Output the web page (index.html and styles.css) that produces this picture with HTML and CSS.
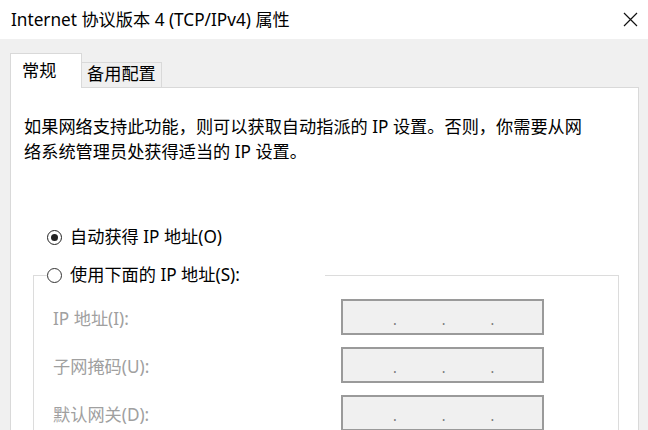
FILE: index.html
```html
<!DOCTYPE html>
<html lang="zh-CN">
<head>
<meta charset="utf-8">
<title>Internet 协议版本 4 (TCP/IPv4) 属性</title>
<link rel="stylesheet" href="styles.css">
</head>
<body>
<div class="window">
  <div class="titlebar">
    <span class="title">Internet 协议版本 4 (TCP/IPv4) 属性</span>
    <svg class="close" width="15" height="15" viewBox="0 0 15 15"><path d="M1 1 L14 14 M14 1 L1 14" stroke="#111" stroke-width="1.2" fill="none"/></svg>
  </div>
  <div class="main">
    <div class="tabs">
      <div class="tab active">常规</div>
      <div class="tab">备用配置</div>
    </div>
    <div class="panel">
      <p class="desc">如果网络支持此功能，则可以获取自动指派的 IP 设置。否则，你需要从网<br>络系统管理员处获得适当的 IP 设置。</p>
      <div class="radio-row auto"><span class="radio checked"></span><span class="radio-label">自动获得 IP 地址(O)</span></div>
      <div class="group">
        <div class="group-head"><span class="radio"></span><span class="radio-label">使用下面的 IP 地址(S):</span></div>
        <div class="fields">
          <span class="field-label">IP 地址(I):</span>
          <div class="ipbox"><span>.</span><span>.</span><span>.</span></div>
          <span class="field-label">子网掩码(U):</span>
          <div class="ipbox"><span>.</span><span>.</span><span>.</span></div>
          <span class="field-label">默认网关(D):</span>
          <div class="ipbox"><span>.</span><span>.</span><span>.</span></div>
        </div>
      </div>
    </div>
  </div>
</div>
</body>
</html>
```
FILE: styles.css
```css
html, body {
  margin: 0;
  padding: 0;
}
body {
  width: 648px;
  height: 430px;
  overflow: hidden;
  background: #f0f0f0;
  font-family: "Noto Sans", "Noto Sans CJK SC", sans-serif;
  font-size: 17.2px;
  color: #000;
}
.titlebar {
  height: 39px;
  background: #fff;
  display: flex;
  align-items: center;
  justify-content: space-between;
  padding: 0 10px 0 11px;
}
.title {
  line-height: 1;
}
.close {
  display: block;
}
.main {
  padding: 14px 9px 0 10px;
}
.tabs {
  display: flex;
  align-items: flex-end;
  height: 34px;
}
.tab {
  box-sizing: border-box;
  display: flex;
  align-items: center;
  border: 1px solid #d9d9d9;
  border-bottom: none;
  line-height: 1;
}
.tab.active {
  width: 72px;
  height: 35px;
  margin-bottom: -1px;
  padding-left: 11px;
  background: #fff;
  position: relative;
  z-index: 1;
}
.tab:not(.active) {
  width: 80px;
  height: 25px;
  border-left: none;
  padding-left: 5px;
  padding-bottom: 3px;
  background: #f0f0f0;
}
.panel {
  box-sizing: border-box;
  height: 420px;
  background: #fff;
  border: 1px solid #d9d9d9;
  padding: 26px 0 0 13px;
}
.desc {
  margin: 0;
  line-height: 25px;
}
.radio-row {
  display: flex;
  align-items: center;
  height: 24px;
}
.radio-row.auto {
  margin-top: 61px;
  padding-left: 23px;
}
.radio {
  box-sizing: border-box;
  width: 15px;
  height: 15px;
  border: 1px solid #333;
  border-radius: 50%;
  display: flex;
  align-items: center;
  justify-content: center;
  flex: none;
}
.radio.checked {
  border: 1.5px solid #222;
}
.radio.checked::after {
  content: "";
  width: 7px;
  height: 7px;
  border-radius: 50%;
  background: #222;
}
.radio-label {
  margin-left: 8px;
  line-height: 1;
}
.group {
  box-sizing: border-box;
  width: 586px;
  margin: 26px 0 0 9px;
  border: 1px solid #dcdcdc;
}
.group-head {
  box-sizing: border-box;
  width: 278px;
  height: 24px;
  margin: -13px 0 0 13px;
  display: flex;
  align-items: center;
  background: #fff;
}
.fields {
  display: grid;
  grid-template-columns: 288px 203px;
  grid-auto-rows: 36px;
  row-gap: 12px;
  padding: 12px 0 0 19px;
}
.field-label {
  color: #a0a0a0;
  display: flex;
  align-items: center;
}
.ipbox {
  box-sizing: border-box;
  border: 2px solid #9a9a9a;
  background: #f0f0f0;
  display: flex;
  align-items: center;
  padding: 4px 0 0 50px;
  gap: 45px;
  color: #777;
  font-size: 14px;
}
```
